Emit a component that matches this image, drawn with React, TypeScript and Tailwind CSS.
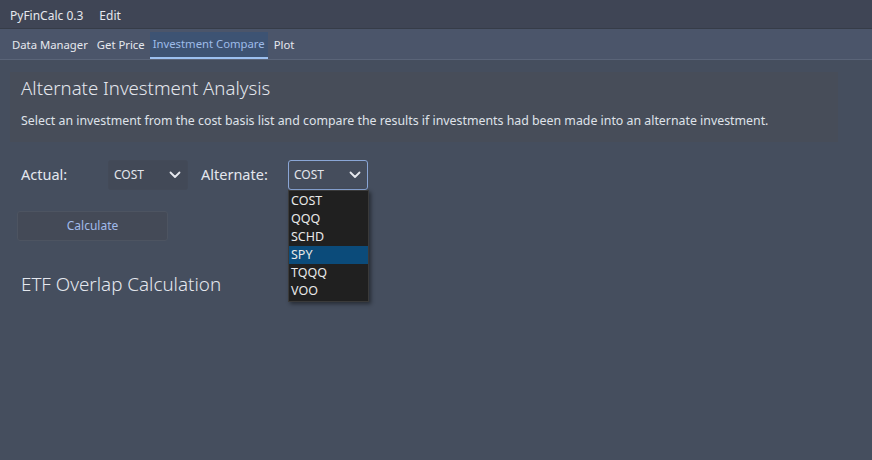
import React from 'react';

const tickers = ['COST', 'QQQ', 'SCHD', 'SPY', 'TQQQ', 'VOO'];

const Chevron = () => (
  <svg width="12" height="8" viewBox="0 0 12 8" fill="none">
    <path d="M1.5 1.5 6 6l4.5-4.5" stroke="#e6e8ee" strokeWidth="1.8" strokeLinecap="round" strokeLinejoin="round" />
  </svg>
);

const Combo = ({ value, focused }: { value: string; focused?: boolean }) => (
  <div
    className={
      'flex h-[30px] w-[80px] items-center justify-between rounded-[3px] pl-[5px] pr-[6px] text-[12px] text-[#e4e6ec] ' +
      (focused ? 'border border-[#8aa6d6] bg-[#454d5c]' : 'border border-[#434a58] bg-[#424957]')
    }
  >
    <span>{value}</span>
    <Chevron />
  </div>
);

const App: React.FC = () => {
  return (
    <div
      className="relative h-[460px] w-[872px] overflow-hidden bg-[#454e5e] text-[#e6e8ee]"
      style={{ fontFamily: '"Noto Sans", "Open Sans", sans-serif' }}
    >
      {/* Menu bar */}
      <div className="flex h-[29px] items-center gap-[16px] border-b border-[#363c48] bg-[#3f4555] pl-[10px] pt-[3px] text-[12px] text-[#e6e8ee]">
        <span>PyFinCalc 0.3</span>
        <span>Edit</span>
      </div>

      {/* Tabs */}
      <div className="flex h-[31px] items-stretch border-b border-[#5a6478] bg-[#4b556a] pl-[10px] pt-[3px] text-[11.3px]">
        <div className="flex items-center px-[2px] text-[#e6e8ee]">Data Manager</div>
        <div className="ml-[5px] flex items-center px-[2px] text-[#e6e8ee]">Get Price</div>
        <div className="ml-[3px] flex items-center border-b-2 border-[#9cc0f0] bg-[#3d5373] px-[3px] text-[#9dbbe8]">
          Investment Compare
        </div>
        <div className="ml-[4px] flex items-center px-[2px] text-[#e6e8ee]">Plot</div>
      </div>

      {/* Content */}
      <div className="flex flex-col px-[10px] pt-[12px]">
        <div className="flex h-[70px] w-[828px] flex-col gap-[17px] bg-[#474d59] px-[11px] pt-[7px]">
          <div className="text-[18.6px] font-light leading-none text-[#e4e7ee]">Alternate Investment Analysis</div>
          <div className="text-[12.35px] leading-none text-[#dfe2e9]">
            Select an investment from the cost basis list and compare the results if investments had been made into an alternate investment.
          </div>
        </div>

        <div className="mt-[18px] flex items-center pl-[11px]">
          <span className="w-[87px] text-[14.5px] text-[#e4e7ee]">Actual:</span>
          <Combo value="COST" />
          <span className="ml-[13px] w-[87px] text-[14.5px] text-[#e4e7ee]">Alternate:</span>
          <div className="relative">
            <Combo value="COST" focused />
            <div className="absolute left-0 top-[30px] z-10 w-[81px] border border-[#3a3a3a] bg-[#202020] py-[1px] shadow-[2px_2px_4px_rgba(0,0,0,0.45)]">
              {tickers.map(t => (
                <div
                  key={t}
                  className={
                    'flex h-[18px] items-center pl-[2px] text-[12.5px] text-[#e8e8e8] ' +
                    (t === 'SPY' ? 'bg-[#0b4b7a]' : '')
                  }
                >
                  {t}
                </div>
              ))}
            </div>
          </div>
        </div>

        <div className="ml-[7px] mt-[21px] flex h-[30px] w-[151px] items-center justify-center rounded-[3px] border border-[#4d5461] bg-[#444a57] text-[12px] text-[#a1bbeb]">
          Calculate
        </div>

        <div className="ml-[11px] mt-[34px] text-[18.8px] font-light leading-none text-[#e4e7ee]">ETF Overlap Calculation</div>
      </div>
    </div>
  );
};

export default App;
